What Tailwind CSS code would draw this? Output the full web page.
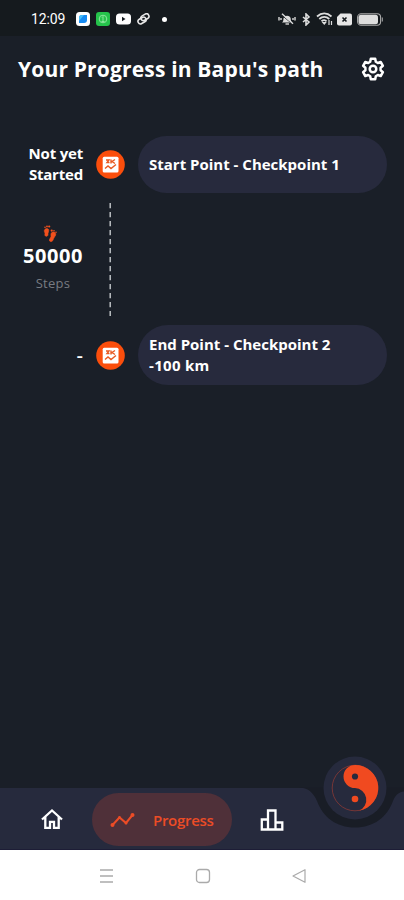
<!DOCTYPE html>
<html lang="en">
<head>
<meta charset="utf-8">
<title>Your Progress</title>
<script src="https://cdn.jsdelivr.net/npm/@tailwindcss/browser@4"></script>
</head>
<body class="w-[404px] h-[900px] overflow-hidden flex flex-col bg-[#1a1f28] text-white font-['Open_Sans',sans-serif] whitespace-nowrap">
<header class="h-9 shrink-0 bg-[#151a1e] flex items-center justify-between pl-[31px] pr-[21px] pt-[2px]">
  <div class="flex items-center">
    <span class="w-[45px] text-[14px] font-['Roboto',sans-serif] font-normal tracking-[-0.1px]">12:09</span>
    <svg class="w-[14px] h-[14px]" viewBox="0 0 14 14"><rect width="14" height="14" rx="3.5" fill="#fff"/><path d="M3 6a3 3 0 0 1 3-3h5v5a3 3 0 0 1-3 3H3z" fill="#168bf2"/><path d="M3 6a3 3 0 0 1 3-3h2L3 9z" fill="#44bdf7"/></svg>
    <svg class="w-[14px] h-[14px] ml-[6px]" viewBox="0 0 14 14"><rect width="14" height="14" rx="3" fill="#25c34b"/><circle cx="7" cy="7" r="3.8" fill="none" stroke="#8be69c"/><path d="M6 5.5l1-1v5M5.5 9.5h3" stroke="#8be69c" fill="none"/></svg>
    <svg class="w-[15px] h-[12px] ml-[6px]" viewBox="0 0 15 12"><rect y=".5" width="15" height="11" rx="3.5" fill="#fff"/><path d="M6 3.8v4.400L9.500 6z" fill="#151a1e"/></svg>
    <svg class="w-[13px] h-[12px] ml-[6px]" viewBox="0 0 13 12" fill="none" stroke="#e8e8e8" stroke-width="1.6"><rect x="3.6" y="1.6" width="8.5" height="5" rx="2.5" transform="rotate(-30 8 4)"/><rect x=".8" y="5" width="8.5" height="5" rx="2.5" transform="rotate(-30 5 7.5)"/></svg>
    <span class="w-[5px] h-[5px] rounded-full bg-white ml-[12px]"></span>
  </div>
  <div class="flex items-center">
    <svg class="w-[18px] h-[14px]" viewBox="0 0 18 14"><path d="M4 10.500c1.300-1 1.300-2 1.500-4a3.700 3.700 0 0 1 7.200 0c.1 2 .2 3 1.500 4z" fill="#ddd"/><path d="M7.500 12h3.500M1 5v3.500M3 6v2M17 5v3.500M15 6v2" stroke="#ccc" stroke-width="1.500"/><path d="M4 3.300l11 9.200" stroke="#151a1e" stroke-width="1"/><path d="M4 1.800l11 10" stroke="#ddd" stroke-width="1.400"/></svg>
    <svg class="w-[9px] h-[13px] ml-[6px]" viewBox="0 0 9 13" fill="none" stroke="#ddd" stroke-width="1.600"><path d="M1 4l6 5-3 3V1l3 3-6 5"/></svg>
    <svg class="w-[17px] h-[14px] ml-[5px]" viewBox="0 0 17 14" fill="none" stroke="#ddd" stroke-width="1.800"><path d="M1 4.500c4.500-4 10-4 14.500 0M3.300 7c3-2.700 7-2.700 10 0M5.500 9.300c1.800-1.500 3.700-1.500 5 0"/><path d="M7 10.500l1.300 1.500 1.200-1.500zM13 8v5M15.500 9v4" stroke-width="1.200"/></svg>
    <svg class="w-[15px] h-[13px] ml-[4px]" viewBox="0 0 15 13"><path d="M3.500.5H13a2 2 0 0 1 2 2v8a2 2 0 0 1-2 2H2a2 2 0 0 1-2-2V4z" fill="#e6e6e6"/><path d="M5.500 4.500l4 4M9.500 4.500l-4 4" stroke="#151a1e" stroke-width="1.600"/></svg>
    <svg class="w-[26px] h-[13px] ml-[5px]" viewBox="0 0 26 13"><rect x=".6" y=".8" width="23" height="11.400" rx="3.500" fill="none" stroke="#aaa" stroke-width="1.100"/><rect x="1.500" y="1.700" width="19.500" height="9.600" rx="2.500" fill="#ddd"/><path d="M25.300 4.500v4" stroke="#aaa"/></svg>
  </div>
</header>

<div class="h-[100px] shrink-0 flex items-start justify-between pl-[18px] pr-[19px] pt-5">
  <h1 class="text-[21px] leading-[26px] font-bold tracking-[0.17px]">Your Progress in Bapu's path</h1>
  <svg class="w-6 h-6 mt-px" viewBox="0 0 24 24" fill="none" stroke="#fff" stroke-width="2.500" stroke-linejoin="round"><path d="M9.800 1.800h4.400l.6 3 2 1.200 2.900-1 2.200 3.800-2.300 2v2.400l2.300 2-2.200 3.800-2.900-1-2 1.200-.6 3H9.800l-.6-3-2-1.200-2.900 1-2.200-3.800 2.300-2v-2.400l-2.300-2L4.300 5l2.900 1 2-1.200z"/><circle cx="12" cy="12" r="3.300"/></svg>
</div>

<main class="flex-1 text-[15px] leading-[21px] font-bold">
  <section class="h-[57px] flex items-center">
    <p class="w-[83px] text-right tracking-[-0.2px] -mt-px">Not yet<br>Started</p>
    <svg class="w-[29px] h-[29px] ml-[13px]" viewBox="0 0 29 29"><circle cx="14.500" cy="14.500" r="14.300" fill="#fb4e0c"/><rect x="6.700" y="6.700" width="15.800" height="15.800" rx="1.500" fill="#fff"/><path d="M10 10h3l-2 2.500h2.500M15 9.500v4M19 9.500l-3 2 3 2M9 18.500l3-2.500 3 2.500 5-4" fill="none" stroke="#e85a22" stroke-width="1.400"/></svg>
    <div class="ml-[13px] w-[249px] h-full rounded-[29px] bg-[#272a3d] flex items-center pl-[11px]"><span>Start Point - Checkpoint 1</span></div>
  </section>
  <section class="h-[132px] flex">
    <div class="w-[83px] pl-[23px] pt-[32px] flex flex-col items-center">
      <svg class="w-[14px] h-[18px] ml-[-6px]" viewBox="0 0 14 18" fill="#f2501d"><path d="M1.500 5C3 2.700 6 3.300 5.700 5.800L5 8.500c.2 1.500-.3 3-1.700 2.800-1.500 0-1.600-1.500-1.300-2.800C1.800 7 .8 6.200 1.500 5zM12.700 10c.5-2-1.300-3.700-3.500-2.700C7.500 8 8 10 8 11.500c-.2 1.500-1.500 2-1.600 3.500 0 1.500 1.500 2 2.700 1.200 1.200-.7 1-2 1.800-3.200z" stroke="#f2501d" stroke-width=".6"/><circle cx="2" cy="2.300" r=".8"/><circle cx="4" cy="1.400" r=".9"/><circle cx="6.200" cy="1.500" r="1.100"/><circle cx="8.700" cy="5.600" r="1.100"/><circle cx="11" cy="5.800" r=".8"/><circle cx="13" cy="7.200" r=".8"/></svg>
      <p class="text-[20px] leading-6 mt-[1px] tracking-[0.6px]">50000</p>
      <p class="text-[13px] leading-[18px] mt-[6px] font-normal tracking-[0.3px] text-[#777b82]">Steps</p>
    </div>
    <svg class="w-[2px] h-[113px] ml-[26px] mt-[10px]" viewBox="0 0 2 113"><path d="M1.200 0v113" stroke="#c6c9cc" stroke-width="1.400" stroke-dasharray="5.300 3.700"/></svg>
  </section>
  <section class="h-[60px] flex items-center">
    <p class="w-[83px] text-right"><span class="inline-block scale-x-125 origin-right">-</span></p>
    <svg class="w-[29px] h-[29px] ml-[13px]" viewBox="0 0 29 29"><circle cx="14.500" cy="14.500" r="14.300" fill="#fb4e0c"/><rect x="6.700" y="6.700" width="15.800" height="15.800" rx="1.500" fill="#fff"/><path d="M10 10h3l-2 2.500h2.500M15 9.500v4M19 9.500l-3 2 3 2M9 18.500l3-2.500 3 2.500 5-4" fill="none" stroke="#e85a22" stroke-width="1.400"/></svg>
    <div class="ml-[13px] w-[249px] h-full rounded-[30px] bg-[#272a3d] flex items-center pl-[11px]"><p>End Point - Checkpoint 2<br><span class="tracking-[0.3px]">-100 km</span></p></div>
  </section>
</main>

<nav class="relative h-[62px] shrink-0 flex items-center bg-[#262a3d] border-b border-[#1d1d36]">
  <svg class="absolute right-0 top-[-38px] w-[110px] h-[100px]" viewBox="0 0 110 100"><path d="M5 37.500C14 38 19 42 23 51c6 16 19 26.500 38 26.500S93 67 99 51c2-5 5-9 11-9.500v-4z" fill="#191d26"/><circle cx="61" cy="38" r="31.500" fill="#262a3d"/><circle cx="61" cy="38" r="22.800" fill="none" stroke="#963b34" stroke-width=".7"/><path d="M61 15a23 23 0 0 1 4 45.700A11.800 11.800 0 0 0 61 38a11.500 11.500 0 0 1 0-23z" fill="#f04a20"/><circle cx="61" cy="26.500" r="3.100" fill="#262a3d"/><circle cx="61" cy="49" r="3.300" fill="#f04a20"/></svg>
  <svg class="w-6 h-[22px] ml-10 mt-px" viewBox="0 0 24 22" fill="none" stroke="#fff" stroke-width="2.300"><path d="M2 11.500L12 2.500l10 9M5.300 9v10.800H10v-6h4v6h4.700V9"/></svg>
  <div class="ml-[28px] mt-[2px] w-[140px] h-[53px] rounded-full bg-[#4f3039] flex items-center pl-[18px] text-[#ec4c26]">
    <svg class="w-[26px] h-[16px]" viewBox="0 0 26 16" fill="currentColor"><path d="M2.500 13l7-7.500 6.500 5.500L22.500 3" fill="none" stroke="currentColor" stroke-width="2"/><circle cx="2.500" cy="13" r="2"/><circle cx="9.500" cy="5.500" r="1.500"/><circle cx="16" cy="11" r="1.500"/><circle cx="22.500" cy="3" r="2"/></svg>
    <span class="ml-[17px] mt-[2px] text-[15px] font-semibold tracking-[-0.3px]">Progress</span>
  </div>
  <svg class="w-6 h-[22px] ml-[28px] mt-[3px]" viewBox="0 0 24 22" fill="none" stroke="#fff" stroke-width="2.300"><path d="M1.800 20.500V10.500H8v10zM8 20.500V1.500h7.500v19zM15.500 20.500v-7h6.800v7z"/></svg>
</nav>
<footer class="h-[50px] shrink-0 bg-white flex items-center pl-[99px]">
  <svg class="w-4 h-4 mt-[2px]" viewBox="0 0 16 16" stroke="#aaa" stroke-width="1.300"><path d="M1 2h13M1 8h13M1 14h13"/></svg>
  <svg class="w-4 h-4 ml-[80px] mt-[2px]" viewBox="0 0 16 16" fill="none" stroke="#aaa" stroke-width="1.300"><rect x="1.500" y="1.500" width="13" height="13" rx="3"/></svg>
  <svg class="w-4 h-4 ml-[81px] mt-[2px]" viewBox="0 0 16 16" fill="none" stroke="#aaa" stroke-width="1.200" stroke-linejoin="round"><path d="M1 8l12-6.300v12.600z"/></svg>
</footer>
</body>
</html>
